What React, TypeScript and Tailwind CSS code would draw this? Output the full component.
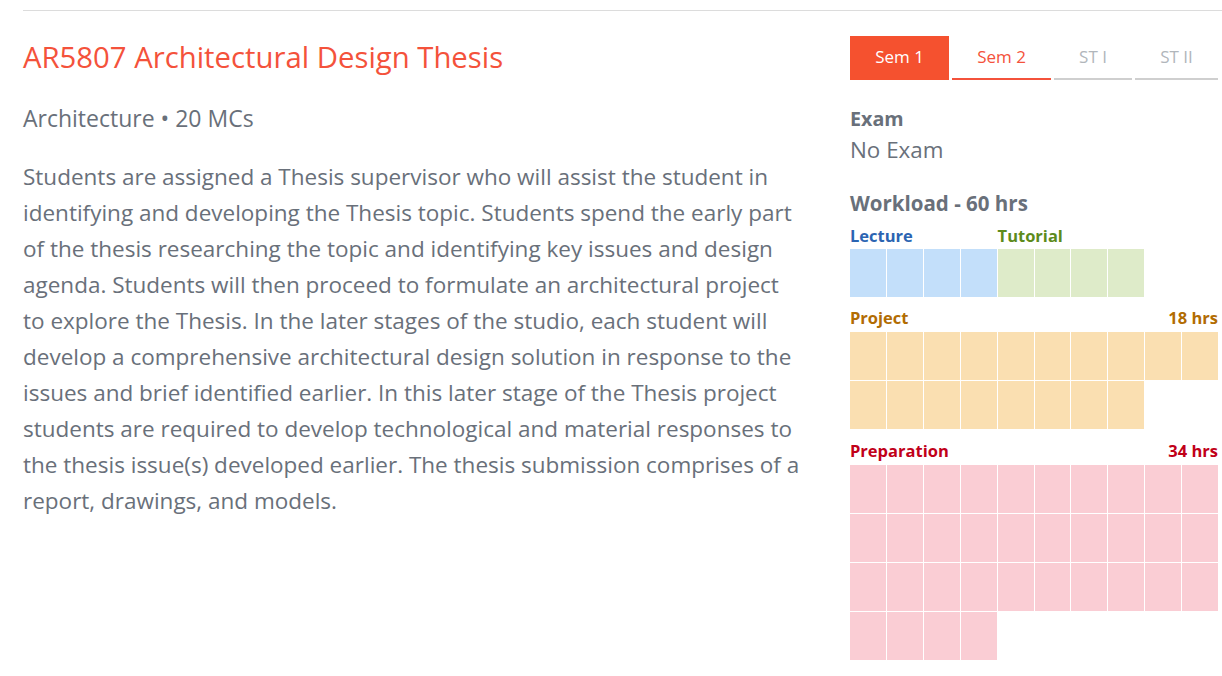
import { FunctionComponent } from "react";

type WorkloadGroup = {
  name: string;
  hours: number;
  label: string;
  cell: string;
};

const description =
  "Students are assigned a Thesis supervisor who will assist the student in identifying and developing the Thesis topic. Students spend the early part of the thesis researching the topic and identifying key issues and design agenda. Students will then proceed to formulate an architectural project to explore the Thesis. In the later stages of the studio, each student will develop a comprehensive architectural design solution in response to the issues and brief identified earlier. In this later stage of the Thesis project students are required to develop technological and material responses to the thesis issue(s) developed earlier. The thesis submission comprises of a report, drawings, and models.";

const tabs = [
  { label: "Sem 1", state: "active", width: "w-[99px]" },
  { label: "Sem 2", state: "offered", width: "w-[99px]" },
  { label: "ST I", state: "none", width: "w-[78px]" },
  { label: "ST II", state: "none", width: "w-[83px]" },
];

const lecture: WorkloadGroup = { name: "Lecture", hours: 4, label: "text-[#2b64b2]", cell: "bg-[#c3dffa]" };
const tutorial: WorkloadGroup = { name: "Tutorial", hours: 4, label: "text-[#5d8b1c]", cell: "bg-[#deebc9]" };
const project: WorkloadGroup = { name: "Project", hours: 18, label: "text-[#b26c02]", cell: "bg-[#fadfb1]" };
const preparation: WorkloadGroup = { name: "Preparation", hours: 34, label: "text-[#c10019]", cell: "bg-[#facdd4]" };

const Cells: FunctionComponent<{ count: number; cell: string }> = ({ count, cell }) => (
  <div className="grid grid-cols-10 gap-[1px]">
    {Array.from({ length: count }).map((_, i) => (
      <div key={i} className={`h-[48px] ${cell}`} />
    ))}
  </div>
);

const WideGroup: FunctionComponent<{ group: WorkloadGroup; className?: string }> = ({ group, className = "" }) => (
  <div className={className}>
    <div className={`flex justify-between h-[20px] leading-[20px] text-[16.5px] font-bold ${group.label}`}>
      <span>{group.name}</span>
      <span>{group.hours} hrs</span>
    </div>
    <div className="mt-[4px]">
      <Cells count={group.hours} cell={group.cell} />
    </div>
  </div>
);

export default function App() {
  return (
    <div className="min-h-[676px] bg-white pt-[10px] text-[#69707a] font-['Open_Sans','Noto_Sans',sans-serif]">
      <div className="ml-[23px] border-t border-[#dcdcdc] pr-[4px] flex gap-[45px]">
        {/* left: module info */}
        <div className="w-[782px] shrink-0">
          <h1 className="mt-[29px] text-[29.3px] leading-[34px] text-[#f4523b] font-normal">
            AR5807 Architectural Design Thesis
          </h1>
          <div className="mt-[28px] text-[23px] leading-[33px]">Architecture • 20 MCs</div>
          <p className="mt-[24px] text-[22.5px] leading-[36px]">{description}</p>
        </div>

        {/* right: semesters + workload */}
        <div className="w-[368px] shrink-0">
          <div className="mt-[25px] flex gap-[3px]">
            {tabs.map((t) => (
              <div
                key={t.label}
                className={`${t.width} h-[44px] flex items-center justify-center text-[17px] border-b-2 ${
                  t.state === "active"
                    ? "bg-[#f5512f] border-[#f5512f] text-white"
                    : t.state === "offered"
                      ? "border-[#f4523b] text-[#f4523b]"
                      : "border-[#cfcfcf] text-[#b1b6bb]"
                }`}
              >
                {t.label}
              </div>
            ))}
          </div>

          <div className="mt-[26px] text-[19.7px] leading-[25px] font-bold">Exam</div>
          <div className="mt-[3px] text-[22.4px] leading-[31px]">No Exam</div>

          <div className="mt-[25px] text-[20.5px] leading-[26px] font-bold">Workload - 60 hrs</div>

          <div className="mt-[10px]">
            <div className="grid grid-cols-10 gap-[1px] h-[20px] leading-[20px] text-[16.5px] font-bold">
              <span className={`col-span-4 ${lecture.label}`}>{lecture.name}</span>
              <span className={`col-span-4 ${tutorial.label}`}>{tutorial.name}</span>
            </div>
            <div className="mt-[3px] grid grid-cols-10 gap-[1px]">
              {Array.from({ length: lecture.hours }).map((_, i) => (
                <div key={`l${i}`} className={`h-[48px] ${lecture.cell}`} />
              ))}
              {Array.from({ length: tutorial.hours }).map((_, i) => (
                <div key={`t${i}`} className={`h-[48px] ${tutorial.cell}`} />
              ))}
            </div>
          </div>

          <WideGroup group={project} className="mt-[11px]" />
          <WideGroup group={preparation} className="mt-[12px]" />
        </div>
      </div>
    </div>
  );
}
